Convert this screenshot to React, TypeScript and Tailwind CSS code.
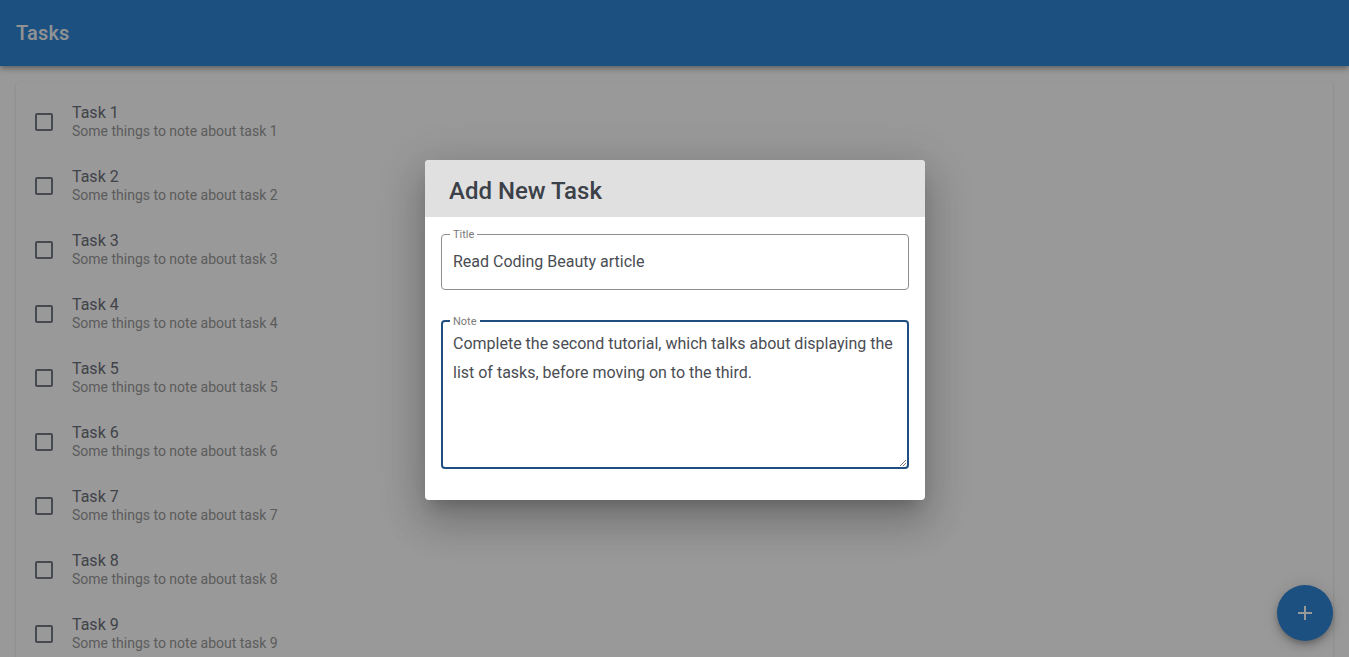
import React from "react";

const tasks = Array.from({ length: 9 }, (_, i) => i + 1);

export default function App() {
  return (
    <div
      className="relative h-[657px] overflow-hidden bg-white"
      style={{ fontFamily: "Roboto, 'Liberation Sans', sans-serif" }}
    >
      <header className="relative z-10 flex h-[66px] items-center bg-[#3085d8] px-4 shadow-[0_2px_4px_-1px_rgba(0,0,0,0.2),0_4px_5px_0_rgba(0,0,0,0.14),0_1px_10px_0_rgba(0,0,0,0.12)]">
        <h1 className="text-[20px] font-medium tracking-[0.15px] text-[#f4f4f4]">Tasks</h1>
      </header>

      <main className="px-4 pt-4">
        <div className="rounded bg-white py-2 shadow-[0_2px_1px_-1px_rgba(0,0,0,0.2),0_1px_1px_0_rgba(0,0,0,0.14),0_1px_3px_0_rgba(0,0,0,0.12)]">
          {tasks.map((n) => (
            <div key={n} className="flex h-16 items-center">
              <div className="flex w-[56px] items-center pl-[19px]">
                <div className="h-[18px] w-[18px] rounded-[2px] border-2 border-[#767b84]" />
              </div>
              <div className="flex flex-col pb-[2px]">
                <span className="text-[16px] leading-[20px] text-[#6b7078]">Task {n}</span>
                <span className="text-[14px] leading-[16px] text-[#9a9a9a]">
                  Some things to note about task {n}
                </span>
              </div>
            </div>
          ))}
        </div>
      </main>

      <button className="absolute bottom-[16px] right-[16px] flex h-14 w-14 items-center justify-center rounded-full bg-[#3085d8] shadow-[0_3px_5px_-1px_rgba(0,0,0,0.2),0_6px_10px_0_rgba(0,0,0,0.14),0_1px_18px_0_rgba(0,0,0,0.12)]">
        <svg width="24" height="24" viewBox="0 0 24 24" fill="white">
          <path d="M19 13h-6v6h-2v-6H5v-2h6V5h2v6h6v2z" />
        </svg>
      </button>

      {/* backdrop */}
      <div className="absolute inset-0 z-20 bg-black/40" />

      {/* dialog */}
      <div className="absolute left-[425px] top-[160px] z-30 w-[500px] overflow-hidden rounded bg-white shadow-[0_11px_15px_-7px_rgba(0,0,0,0.2),0_24px_38px_3px_rgba(0,0,0,0.14),0_9px_46px_8px_rgba(0,0,0,0.12)]">
        <div className="flex h-[57px] items-center bg-[#e0e0e0] px-6 pt-[5px]">
          <h2 className="text-[24px] font-medium text-[#3c4048]">Add New Task</h2>
        </div>
        <div className="px-4 pb-[31px] pt-[17px]">
          <fieldset className="h-[56px] rounded border border-[#8e8e8e] px-[8px]">
            <legend className="px-[3px] text-[11px] leading-[1px] text-[#7a7a7a]">Title</legend>
            <div className="pl-[3px] pt-[15px] text-[16px] text-[#4a4d53]">Read Coding Beauty article</div>
          </fieldset>
          <fieldset className="relative mt-[30px] h-[149px] rounded border-2 border-[#1e4f80] px-[7px]">
            <legend className="px-[3px] text-[11px] leading-[1px] text-[#7a7a7a]">Note</legend>
            <div className="pl-[3px] pt-[7px] text-[16px] leading-[29px] text-[#4a4d53]">
              Complete the second tutorial, which talks about displaying the list of tasks, before moving on to the third.
            </div>
            <svg className="absolute bottom-[0px] right-[0px]" width="8" height="8" viewBox="0 0 8 8">
              <path d="M7 1L1 7M7 4L4 7" stroke="#777" strokeWidth="1" />
            </svg>
          </fieldset>
        </div>
      </div>
    </div>
  );
}
